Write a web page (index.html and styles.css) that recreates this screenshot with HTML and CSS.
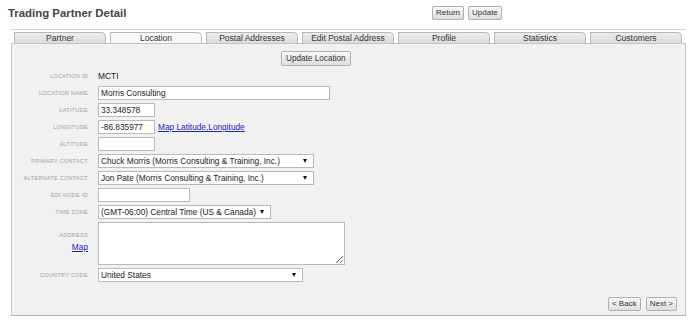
FILE: index.html
```html
<!DOCTYPE html>
<html lang="en">
<head>
  <meta charset="UTF-8" />
  <title>Trading Partner Detail</title>
  <link rel="stylesheet" href="styles.css">
</head>
<body>
  <div class="page-head">
    <div class="page-title">Trading Partner Detail</div>
    <div class="head-actions">
      <button class="btn">Return</button>
      <button class="btn">Update</button>
    </div>
  </div>

  <div class="tab-box">
    <div class="tab-row">
      <div class="tab">Partner</div>
      <div class="tab active">Location</div>
      <div class="tab">Postal Addresses</div>
      <div class="tab">Edit Postal Address</div>
      <div class="tab">Profile</div>
      <div class="tab">Statistics</div>
      <div class="tab">Customers</div>
    </div>

    <div class="panel">
      <div class="panel-top">
        <button class="btn btn-big">Update Location</button>
      </div>

      <div class="form">
        <div class="lbl">Location ID</div>
        <div class="val">MCTI</div>

        <div class="lbl">Location Name</div>
        <div><input class="field w-name" type="text" value="Morris Consulting"></div>

        <div class="lbl">Latitude</div>
        <div><input class="field w-num" type="text" value="33.348578"></div>

        <div class="lbl">Longitude</div>
        <div class="inline">
          <input class="field w-num" type="text" value="-86.835977">
          <a href="#" class="link">Map Latitude,Longitude</a>
        </div>

        <div class="lbl">Altitude</div>
        <div><input class="field w-num" type="text" value=""></div>

        <div class="lbl">Primary Contact</div>
        <div><span class="sel w-contact"><select><option>Chuck Morris (Morris Consulting &amp; Training, Inc.)</option></select></span></div>

        <div class="lbl">Alternate Contact</div>
        <div><span class="sel w-contact"><select><option>Jon Pate (Morris Consulting &amp; Training, Inc.)</option></select></span></div>

        <div class="lbl">EDI Node ID</div>
        <div><input class="field w-edi" type="text" value=""></div>

        <div class="lbl">Time Zone</div>
        <div><span class="sel w-tz"><select><option>(GMT-06:00) Central Time (US &amp; Canada)</option></select></span></div>

        <div class="lbl lbl-addr">
          <div>Address</div>
          <a href="#" class="link map-link">Map</a>
        </div>
        <div><textarea class="field w-addr"></textarea></div>

        <div class="lbl">Country Code</div>
        <div><span class="sel w-country"><select><option>United States</option></select></span></div>
      </div>

      <div class="panel-nav">
        <button class="btn">&lt; Back</button>
        <button class="btn">Next &gt;</button>
      </div>
    </div>
  </div>
</body>
</html>
```

FILE: styles.css
```css
html, body {
  margin: 0;
  padding: 0;
  background: #fff;
  font-family: 'Liberation Sans', Arial, sans-serif;
  color: #222;
  width: 691px;
  height: 320px;
  overflow: hidden;
}

/* header */
.page-head {
  display: flex;
  align-items: center;
  height: 29px;
  padding-left: 8px;
}

.page-title {
  width: 424px;
  font-size: 11.4px;
  font-weight: bold;
  color: #444;
  margin-top: -4px;
}

.head-actions {
  display: flex;
  gap: 4px;
  margin-top: -3px;
}

.btn {
  display: block;
  height: 14px;
  padding: 0 3px;
  border: 1px solid #b0b0b0;
  border-radius: 2px;
  background: linear-gradient(to bottom, #f7f7f7, #dedede);
  font-family: 'Liberation Sans', Arial, sans-serif;
  font-size: 8px;
  color: #333;
  line-height: 12px;
}

.btn-big {
  height: 15px;
  padding: 0 4px;
  font-size: 8.2px;
}

/* tabs */
.tab-box {
  margin-left: 11px;
  width: 675px;
  border-top: 1px solid #d4d4d4;
}

.tab-row {
  display: flex;
  gap: 4px;
  padding: 2px 0 0 3px;
}

.tab {
  width: 90px;
  height: 10px;
  border: 1px solid #b8b8b8;
  border-bottom: none;
  border-top-right-radius: 5px;
  background: linear-gradient(to bottom, #ececec, #dcdcdc);
  font-size: 8.5px;
  line-height: 11px;
  text-align: center;
  color: #333;
  overflow: hidden;
  white-space: nowrap;
}

.tab.active {
  background: #f7f7f7;
}

.panel {
  display: flex;
  flex-direction: column;
  height: 271px;
  border: 1px solid #c4c4c4;
  border-bottom-color: #b4b4b4;
  background: #f1f1f1;
}

.panel-top {
  display: flex;
  padding: 7px 0 0 269px;
}

/* form */
.form {
  display: grid;
  grid-template-columns: 76px auto;
  column-gap: 10px;
  row-gap: 3px;
  margin-top: 3px;
}

.form > div {
  height: 14px;
}

.lbl {
  text-align: right;
  text-transform: uppercase;
  font-size: 5.5px;
  letter-spacing: 0.3px;
  line-height: 14px;
  color: #a0a0a0;
}

.val {
  font-size: 8.4px;
  line-height: 14px;
}

.field {
  box-sizing: border-box;
  height: 14px;
  margin: 0;
  padding: 0 2px;
  border: 1px solid #b9b9b9;
  background: #fff;
  font-family: 'Liberation Sans', Arial, sans-serif;
  font-size: 8.3px;
  color: #222;
  display: block;
}

.inline {
  display: flex;
  align-items: center;
  gap: 3px;
}

.link {
  color: #2323b8;
  font-size: 8.3px;
}

.w-num { width: 57px; }
.w-name { width: 232px; }
.w-edi { width: 92px; }
.w-addr {
  width: 247px;
  height: 43px;
  resize: both;
}

.form > .lbl-addr,
.form > .lbl-addr + div {
  height: 43px;
}

.lbl-addr {
  box-sizing: border-box;
  padding-top: 10px;
}

.lbl-addr div {
  line-height: 7px;
}

.map-link {
  display: block;
  margin-top: 3px;
  letter-spacing: 0;
  text-transform: none;
  font-size: 8.3px;
  line-height: 10px;
}

/* select with small arrow */
.sel {
  position: relative;
  display: block;
  height: 14px;
}

.sel select {
  appearance: none;
  -webkit-appearance: none;
  display: block;
  box-sizing: border-box;
  width: 100%;
  height: 14px;
  margin: 0;
  padding: 0 12px 0 2px;
  border: 1px solid #b9b9b9;
  border-radius: 0;
  background: #fff;
  font-family: 'Liberation Sans', Arial, sans-serif;
  font-size: 8.3px;
  line-height: 12px;
  color: #222;
}

.sel::after {
  content: "";
  position: absolute;
  right: 7px;
  top: 5px;
  border-left: 2.5px solid transparent;
  border-right: 2.5px solid transparent;
  border-top: 4px solid #111;
  pointer-events: none;
}

.w-contact { width: 216px; }
.w-tz { width: 173px; }
.w-country { width: 205px; }

.panel-nav {
  display: flex;
  justify-content: flex-end;
  gap: 5px;
  margin-top: auto;
  padding: 0 8px 4px 0;
}
```
